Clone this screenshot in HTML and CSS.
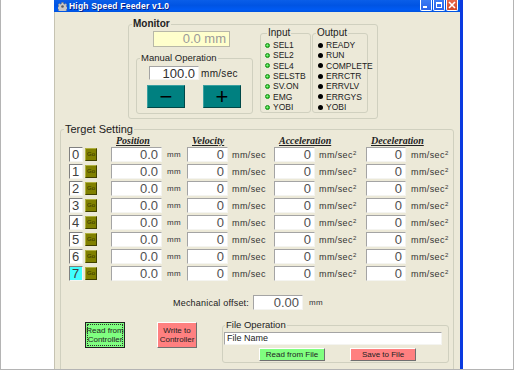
FILE: index.html
```html
<!DOCTYPE html>
<html lang="en">
  <head>
    <meta charset="UTF-8" />
    <title>High Speed Feeder v1.0</title>
    <link rel="stylesheet" href="styles.css">
  </head>
  <body>
    <div class="screen">
      <div class="window">
        <div class="titlebar">
          <svg class="app-icon" width="9" height="9" viewBox="0 0 9 9">
            <g fill="#c8c8c8" stroke="#808080" stroke-width="0.6">
              <path d="M3.7 0.5h1.6l0.3 1.3 1.1 0.5 1.1-0.7 1.1 1.1-0.7 1.1 0.5 1.1 1.3 0.3v1.6l-1.3 0.3-0.5 1.1 0.7 1.1-1.1 1.1-1.1-0.7-1.1 0.5-0.3 1.3h-1.6l-0.3-1.3-1.1-0.5-1.1 0.7-1.1-1.1 0.7-1.1-0.5-1.1-1.3-0.3v-1.6l1.3-0.3 0.5-1.1-0.7-1.1 1.1-1.1 1.1 0.7 1.1-0.5z"/>
            </g>
            <circle cx="4.5" cy="4.5" r="1.3" fill="#5a5a5a"/>
          </svg>
          <span class="title">High Speed Feeder v1.0</span>
          <div class="caption-buttons">
            <span class="cap cap-min"><i></i></span>
            <span class="cap cap-max"><i></i></span>
            <span class="cap cap-close">
              <svg width="8" height="8" viewBox="0 0 8 8"><path d="M1 1L7 7M7 1L1 7" stroke="#fff" stroke-width="1.6"/></svg>
            </span>
          </div>
        </div>

        <div class="client">
          <fieldset class="group monitor">
            <legend>Monitor</legend>
            <div class="monitor-body">
              <div class="monitor-left">
                <div class="readout">0.0 mm</div>
                <fieldset class="group manual">
                  <legend>Manual Operation</legend>
                  <div class="speed-row">
                    <div class="field speed">100.0</div>
                    <span class="speed-unit">mm/sec</span>
                  </div>
                  <div class="jog">
                    <button class="jog-btn">&minus;</button>
                    <button class="jog-btn">+</button>
                  </div>
                </fieldset>
              </div>

              <fieldset class="group io io-in">
                <legend>Input</legend>
                <ul class="signals">
                  <li><span class="led led-on"></span>SEL1</li>
                  <li><span class="led led-on"></span>SEL2</li>
                  <li><span class="led led-on"></span>SEL4</li>
                  <li><span class="led led-on"></span>SELSTB</li>
                  <li><span class="led led-on"></span>SV.ON</li>
                  <li><span class="led led-on"></span>EMG</li>
                  <li><span class="led led-on"></span>YOBI</li>
                </ul>
              </fieldset>

              <fieldset class="group io io-out">
                <legend>Output</legend>
                <ul class="signals">
                  <li><span class="led"></span>READY</li>
                  <li><span class="led"></span>RUN</li>
                  <li><span class="led"></span>COMPLETE</li>
                  <li><span class="led"></span>ERRCTR</li>
                  <li><span class="led"></span>ERRVLV</li>
                  <li><span class="led"></span>ERRGYS</li>
                  <li><span class="led"></span>YOBI</li>
                </ul>
              </fieldset>
            </div>
          </fieldset>

          <fieldset class="group target">
            <legend>Terget Setting</legend>
            <div class="target-grid">
              <span></span><span></span>
              <span class="head">Position</span><span></span>
              <span class="head">Velocity</span><span></span>
              <span class="head">Acceleration</span><span></span>
              <span class="head">Deceleration</span><span></span>

              <span class="num">0</span><button class="go">Go</button>
              <span class="field">0.0</span><span class="unit unit-mm">mm</span>
              <span class="field">0</span><span class="unit">mm/sec</span>
              <span class="field">0</span><span class="unit">mm/sec<sup>2</sup></span>
              <span class="field">0</span><span class="unit unit-last">mm/sec<sup>2</sup></span>

              <span class="num">1</span><button class="go">Go</button>
              <span class="field">0.0</span><span class="unit unit-mm">mm</span>
              <span class="field">0</span><span class="unit">mm/sec</span>
              <span class="field">0</span><span class="unit">mm/sec<sup>2</sup></span>
              <span class="field">0</span><span class="unit unit-last">mm/sec<sup>2</sup></span>

              <span class="num">2</span><button class="go">Go</button>
              <span class="field">0.0</span><span class="unit unit-mm">mm</span>
              <span class="field">0</span><span class="unit">mm/sec</span>
              <span class="field">0</span><span class="unit">mm/sec<sup>2</sup></span>
              <span class="field">0</span><span class="unit unit-last">mm/sec<sup>2</sup></span>

              <span class="num">3</span><button class="go">Go</button>
              <span class="field">0.0</span><span class="unit unit-mm">mm</span>
              <span class="field">0</span><span class="unit">mm/sec</span>
              <span class="field">0</span><span class="unit">mm/sec<sup>2</sup></span>
              <span class="field">0</span><span class="unit unit-last">mm/sec<sup>2</sup></span>

              <span class="num">4</span><button class="go">Go</button>
              <span class="field">0.0</span><span class="unit unit-mm">mm</span>
              <span class="field">0</span><span class="unit">mm/sec</span>
              <span class="field">0</span><span class="unit">mm/sec<sup>2</sup></span>
              <span class="field">0</span><span class="unit unit-last">mm/sec<sup>2</sup></span>

              <span class="num">5</span><button class="go">Go</button>
              <span class="field">0.0</span><span class="unit unit-mm">mm</span>
              <span class="field">0</span><span class="unit">mm/sec</span>
              <span class="field">0</span><span class="unit">mm/sec<sup>2</sup></span>
              <span class="field">0</span><span class="unit unit-last">mm/sec<sup>2</sup></span>

              <span class="num">6</span><button class="go">Go</button>
              <span class="field">0.0</span><span class="unit unit-mm">mm</span>
              <span class="field">0</span><span class="unit">mm/sec</span>
              <span class="field">0</span><span class="unit">mm/sec<sup>2</sup></span>
              <span class="field">0</span><span class="unit unit-last">mm/sec<sup>2</sup></span>

              <span class="num num-active">7</span><button class="go">Go</button>
              <span class="field">0.0</span><span class="unit unit-mm">mm</span>
              <span class="field">0</span><span class="unit">mm/sec</span>
              <span class="field">0</span><span class="unit">mm/sec<sup>2</sup></span>
              <span class="field">0</span><span class="unit unit-last">mm/sec<sup>2</sup></span>
            </div>

            <div class="offset-row">
              <span class="offset-label">Mechanical offset:</span>
              <span class="field offset">0.00</span>
              <span class="unit unit-mm">mm</span>
            </div>

            <div class="bottom-row">
              <button class="big-btn btn-read"><span>Read from<br>Controller</span></button>
              <button class="big-btn btn-write">Write to<br>Controller</button>
              <fieldset class="group file-op">
                <legend>File Operation</legend>
                <div class="field file-name">File Name</div>
                <div class="file-buttons">
                  <button class="small-btn btn-green">Read from File</button>
                  <button class="small-btn btn-pink">Save to File</button>
                </div>
              </fieldset>
            </div>
          </fieldset>
        </div>
      </div>
    </div>
  </body>
</html>
```

FILE: styles.css
```css
body {
  margin: 0;
  background-color: #ffffff;
  font-family: "Liberation Sans", Arial, sans-serif;
  color: #222222;
}

.screen {
  box-sizing: border-box;
  width: 514px;
  height: 370px;
  padding-left: 53px;
  border: 1px solid #b4b4b4;
  border-top: none;
}

.window {
  box-sizing: border-box;
  width: 409px;
  height: 369px;
  border-right: 3px solid #0a3ae0;
  display: flex;
  flex-direction: column;
  overflow: hidden;
}

/* barra de titulo */
.titlebar {
  height: 12px;
  flex-shrink: 0;
  display: flex;
  align-items: center;
  padding: 0 2px 0 4px;
  background: linear-gradient(to bottom, #0a5ee8, #0054e3 45%, #005af2 80%, #0052de);
}

.title {
  margin-left: 2px;
  color: #ffffff;
  font-size: 8.5px;
  font-weight: bold;
  text-shadow: 1px 1px 0 #0a1e80;
  letter-spacing: 0.2px;
}

.caption-buttons {
  margin-left: auto;
  align-self: flex-start;
  display: flex;
  gap: 1px;
}

.cap {
  box-sizing: border-box;
  width: 12px;
  height: 11px;
  border: 1px solid #ffffff;
  border-top: none;
  border-radius: 0 0 2px 2px;
  background: linear-gradient(to bottom, #3c7cf4, #2a62e8);
  display: flex;
  align-items: center;
  justify-content: center;
}

.cap-min i {
  width: 4px;
  height: 2px;
  background-color: #ffffff;
  margin-top: 4px;
  margin-right: 2px;
}

.cap-max i {
  box-sizing: border-box;
  width: 6px;
  height: 6px;
  border: 1px solid #ffffff;
  border-top-width: 2px;
}

.cap-close {
  background: linear-gradient(to bottom, #e8684a, #d24a28);
}

/* area de cliente */
.client {
  flex: 1;
  background-color: #ece9d8;
  border-left: 1px solid #c6c3b2;
}

.group {
  margin: 0;
  border: 1px solid #d0d0bf;
  border-radius: 3px;
  box-sizing: border-box;
  min-width: 0;
}

.group > legend {
  padding: 0 1px;
  font-size: 10px;
  line-height: 10px;
  font-weight: normal;
}

.monitor {
  width: 250px;
  margin: 7px 0 0 73px;
  padding: 2px 0 4px 7px;
}

.monitor > legend {
  margin-left: -4px;
  font-weight: bold;
}

.monitor-body {
  display: flex;
  align-items: flex-start;
}

.monitor-left {
  width: 117px;
}

.readout {
  box-sizing: border-box;
  width: 77px;
  height: 16px;
  margin-left: 17px;
  padding-right: 3px;
  background-color: #ffffcc;
  border: 1px solid #b8b8a8;
  color: #9a9a9a;
  font-size: 13px;
  line-height: 14px;
  text-align: right;
}

.manual {
  width: 117px;
  margin-top: 6px;
  padding: 3px 0 5px 12px;
}

.manual > legend {
  margin-left: -9px;
  font-size: 9.5px;
}

.speed-row {
  display: flex;
  align-items: center;
}

.field {
  box-sizing: border-box;
  height: 15px;
  padding-right: 3px;
  background-color: #ffffff;
  border: 1px solid;
  border-color: #a4a4a4 #f4f4f0 #f4f4f0 #a4a4a4;
  color: #505050;
  font-size: 13px;
  line-height: 13px;
  text-align: right;
}

.speed {
  width: 50px;
  height: 14px;
  color: #303030;
}

.speed-unit {
  margin-left: 2px;
  font-size: 10px;
  letter-spacing: 0.3px;
}

.jog {
  display: flex;
  gap: 18px;
  margin: 5px 0 0 -2px;
}

.jog-btn {
  width: 38px;
  height: 23px;
  padding: 0;
  background-color: #008080;
  border: 1px solid;
  border-color: #3aa0a0 #004848 #004848 #3aa0a0;
  color: #000000;
  font-family: "Liberation Sans", Arial, sans-serif;
  font-size: 22px;
  line-height: 20px;
}

.io {
  margin-top: -3px;
  padding: 2px 0 0 4px;
}

.io-in {
  width: 51px;
  margin-left: 7px;
}

.io-in > legend {
  margin-left: 2px;
}

.io-out {
  width: 56px;
  margin-left: 1px;
  padding-left: 5px;
}

.io-out > legend {
  margin-left: -2px;
}

.signals {
  list-style: none;
  margin: 0;
  padding: 0;
}

.signals li {
  display: flex;
  align-items: center;
  height: 10.33px;
  font-family: "Liberation Sans Narrow", "Liberation Sans", Arial, sans-serif;
  font-size: 8.5px;
  white-space: nowrap;
}

.led {
  flex-shrink: 0;
  box-sizing: border-box;
  width: 5px;
  height: 5px;
  margin-right: 3px;
  border-radius: 50%;
  background-color: #000000;
}

.led-on {
  background: radial-gradient(circle at 40% 40%, #9cff9c, #20c020 70%);
  border: 1px solid #109010;
}

/* tabla de destinos */
.target {
  width: 394px;
  margin: 5px 0 0 5px;
  padding: 1px 0 10px 8px;
}

.target > legend {
  margin-left: -5px;
  font-size: 11px;
  line-height: 11px;
}

.target-grid {
  display: grid;
  grid-template-columns: 16px 26px 51px 25px 41px 46px 41px 51px 40px 1fr;
  grid-template-rows: 9px;
  grid-auto-rows: 15px;
  row-gap: 2px;
}

.head {
  padding-left: 5px;
  font-family: "Liberation Serif", "Times New Roman", serif;
  font-size: 10px;
  font-weight: bold;
  font-style: italic;
  line-height: 9px;
  text-decoration: underline;
  white-space: nowrap;
  color: #222222;
}

.num {
  box-sizing: border-box;
  width: 14px;
  padding-left: 2px;
  background-color: #ffffff;
  border: 1px solid;
  border-color: #808080 #f4f4f0 #f4f4f0 #808080;
  font-size: 13px;
  line-height: 13px;
  color: #404040;
}

.num-active {
  background-color: #40ffff;
}

.go {
  align-self: center;
  width: 12px;
  height: 13px;
  padding: 0;
  background-color: #808000;
  border: 1px solid;
  border-color: #b0b040 #404000 #404000 #b0b040;
  color: #303000;
  font-family: "Liberation Sans", Arial, sans-serif;
  font-size: 6px;
  line-height: 11px;
}

.unit {
  align-self: center;
  padding-left: 4px;
  font-size: 9px;
  letter-spacing: 0.4px;
  white-space: nowrap;
  color: #333333;
}

.unit-mm {
  padding-left: 5px;
  font-size: 8px;
}

.unit-last {
  padding-left: 5px;
}

.unit sup {
  font-size: 6px;
  line-height: 0;
  vertical-align: 3px;
}

.offset-row {
  display: flex;
  align-items: center;
  margin-top: 14px;
}

.offset-label {
  width: 180px;
  text-align: right;
  font-size: 9px;
  letter-spacing: 0.2px;
}

.offset {
  width: 50px;
  margin-left: 4px;
}

.offset-row .unit-mm {
  padding-left: 6px;
}

.bottom-row {
  display: flex;
  align-items: flex-start;
  margin-top: 10px;
}

.big-btn {
  box-sizing: border-box;
  width: 40px;
  height: 26px;
  margin-top: 2px;
  padding: 0;
  overflow: visible;
  font-family: "Liberation Sans Narrow", "Liberation Sans", Arial, sans-serif;
  font-size: 8px;
  line-height: 9px;
  white-space: nowrap;
  color: #222222;
}

.btn-read {
  margin-left: 16px;
  padding: 1px;
  background-color: #80ff80;
  border: 1px solid #202020;
}

.btn-read span {
  display: flex;
  align-items: center;
  justify-content: center;
  height: 100%;
  box-sizing: border-box;
  border: 1px dotted #303030;
}

.btn-write {
  margin-left: 32px;
  background-color: #ff8080;
  border: 1px solid;
  border-color: #ffffff #707070 #707070 #ffffff;
}

.file-op {
  width: 227px;
  margin-left: 25px;
  padding: 2px 0 1px 1px;
}

.file-op > legend {
  margin-left: 1px;
  font-size: 9.5px;
}

.file-name {
  width: 218px;
  height: 13px;
  padding-left: 2px;
  text-align: left;
  font-size: 9px;
  line-height: 11px;
  color: #222222;
}

.file-buttons {
  display: flex;
  gap: 25px;
  margin: 3px 0 0 35px;
}

.small-btn {
  box-sizing: border-box;
  width: 66px;
  height: 13px;
  padding: 0;
  border: 1px solid;
  border-color: #ffffff #707070 #707070 #ffffff;
  font-family: "Liberation Sans", Arial, sans-serif;
  font-size: 8px;
  line-height: 10px;
  color: #222222;
}

.btn-green {
  background-color: #80ff80;
}

.btn-pink {
  background-color: #ff8080;
}
```
